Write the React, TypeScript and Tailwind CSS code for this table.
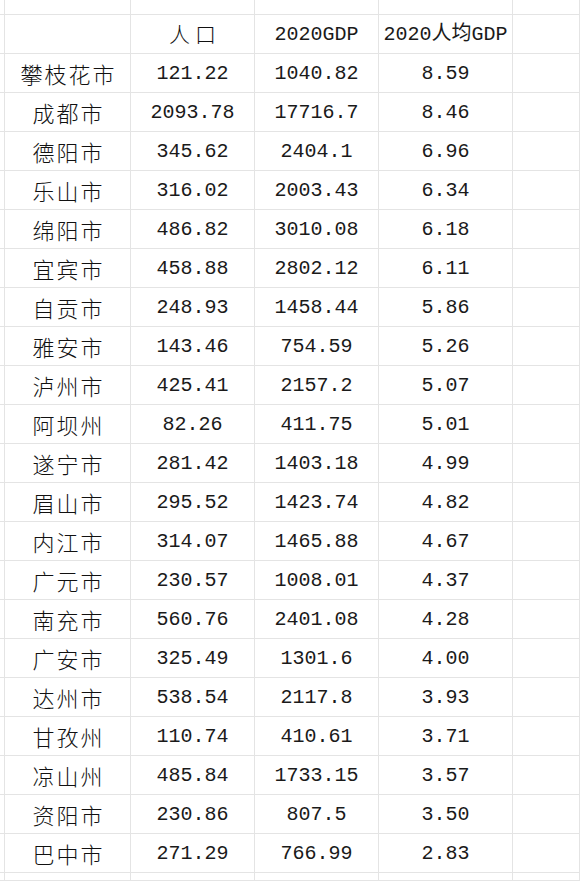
import React from "react";

const rows: [string, string, string, string][] = [
  ["攀枝花市", "121.22", "1040.82", "8.59"],
  ["成都市", "2093.78", "17716.7", "8.46"],
  ["德阳市", "345.62", "2404.1", "6.96"],
  ["乐山市", "316.02", "2003.43", "6.34"],
  ["绵阳市", "486.82", "3010.08", "6.18"],
  ["宜宾市", "458.88", "2802.12", "6.11"],
  ["自贡市", "248.93", "1458.44", "5.86"],
  ["雅安市", "143.46", "754.59", "5.26"],
  ["泸州市", "425.41", "2157.2", "5.07"],
  ["阿坝州", "82.26", "411.75", "5.01"],
  ["遂宁市", "281.42", "1403.18", "4.99"],
  ["眉山市", "295.52", "1423.74", "4.82"],
  ["内江市", "314.07", "1465.88", "4.67"],
  ["广元市", "230.57", "1008.01", "4.37"],
  ["南充市", "560.76", "2401.08", "4.28"],
  ["广安市", "325.49", "1301.6", "4.00"],
  ["达州市", "538.54", "2117.8", "3.93"],
  ["甘孜州", "110.74", "410.61", "3.71"],
  ["凉山州", "485.84", "1733.15", "3.57"],
  ["资阳市", "230.86", "807.5", "3.50"],
  ["巴中市", "271.29", "766.99", "2.83"],
];

const cell = "border-r border-b border-[#e4e4e4] flex items-center justify-center overflow-hidden whitespace-nowrap";
const mono = "font-['Liberation_Mono','Noto_Sans_CJK_SC',monospace] text-[20px] text-[#1a1a1a] pt-[1px]";
const cjk = "font-['Noto_Sans_CJK_SC',sans-serif] font-light text-[22px] tracking-[2px] pl-[2px] text-[#111]";

function Row({ cells, h }: { cells: React.ReactNode[]; h: string }) {
  return (
    <div className={`grid grid-cols-[5px_126px_124px_124px_134px_1fr] ${h}`}>
      {cells.map((c, i) => (
        <div key={i} className={cell}>
          {c}
        </div>
      ))}
    </div>
  );
}

export default function App() {
  return (
    <div className="w-[580px] h-[881px] overflow-hidden bg-white flex flex-col">
      <Row h="h-[15px]" cells={[null, null, null, null, null, null]} />
      <Row
        h="h-[39px]"
        cells={[
          null,
          null,
          <span className="font-['Noto_Sans_CJK_SC',sans-serif] font-light text-[21px] tracking-[5px] pl-[5px] text-[#111]">人口</span>,
          <span className={mono}>2020GDP</span>,
          <span className={mono}>2020人均GDP</span>,
          null,
        ]}
      />
      {rows.map((r) => (
        <Row
          key={r[0]}
          h="h-[39px]"
          cells={[
            null,
            <span className={cjk}>{r[0]}</span>,
            <span className={mono}>{r[1]}</span>,
            <span className={mono}>{r[2]}</span>,
            <span className={mono}>{r[3]}</span>,
            null,
          ]}
        />
      ))}
      <Row h="flex-1" cells={[null, null, null, null, null, null]} />
    </div>
  );
}
